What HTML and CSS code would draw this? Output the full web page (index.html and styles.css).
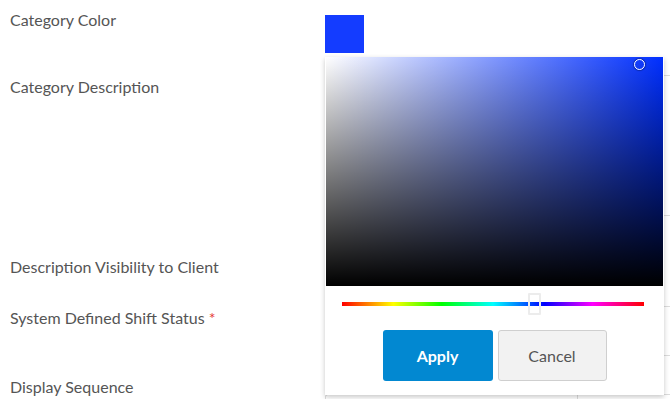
FILE: index.html
```html
<!DOCTYPE html>
<html lang="en">
<head>
    <meta charset="UTF-8">
    <title>Category</title>
    <link rel="stylesheet" href="styles.css">
</head>
<body>
    <div class="form">
        <div class="row row-color">
            <label>Category Color</label>
            <div class="field"><div class="swatch"></div></div>
        </div>
        <div class="row row-desc">
            <label>Category Description</label>
            <div class="field"><div class="textarea"></div></div>
        </div>
        <div class="row row-vis">
            <label>Description Visibility to Client</label>
            <div class="field"></div>
        </div>
        <div class="row row-status">
            <label>System Defined Shift Status <span class="req">*</span></label>
            <div class="field"><div class="select"></div></div>
        </div>
        <div class="row row-seq">
            <label>Display Sequence</label>
            <div class="field"><div class="input"><span class="spin"></span></div></div>
        </div>
    </div>

    <div class="picker">
        <div class="saturation">
            <span class="pointer"></span>
        </div>
        <div class="hue">
            <span class="hue-thumb"></span>
        </div>
        <div class="actions">
            <button class="btn btn-apply">Apply</button>
            <button class="btn btn-cancel">Cancel</button>
        </div>
    </div>
</body>
</html>
```

FILE: styles.css
```css
body {
    margin: 0;
    font-family: Lato, "Open Sans", sans-serif;
    font-size: 16px;
    color: #555;
    background: #fff;
    overflow: hidden;
    height: 399px;
    position: relative;
}
.form {
    width: 670px;
}
.row {
    display: flex;
    align-items: flex-start;
}
.row label {
    width: 315px;
    padding-left: 10px;
    line-height: 20px;
}
.field {
    flex: 1;
}
.req {
    color: #e53935;
}

.row-color { height: 67px; }
.row-color label { margin-top: 10px; }
.swatch {
    margin-top: 15px;
    width: 39px;
    height: 38px;
    background: #143cff;
}

.row-desc { height: 173px; }
.row-desc label { margin-top: 10px; }
.textarea {
    margin-top: 8px;
    height: 139px;
    border: 1px solid #dcdcdc;
    border-right: none;
    border-radius: 3px 0 0 3px;
}

.row-vis { height: 56px; }
.row-vis label { margin-top: 17px; }

.row-status { height: 69px; }
.row-status label { margin-top: 12px; }
.select {
    margin-top: 10px;
    height: 48px;
    border: 1px solid #dcdcdc;
    border-right: none;
    border-radius: 3px 0 0 3px;
}

.row-seq { height: 34px; }
.row-seq label { margin-top: 12px; }
.input {
    margin-top: 29px;
    height: 4px;
    border-top: 1px solid #dcdcdc;
    border-left: 1px solid #dcdcdc;
    border-radius: 3px 0 0 0;
    position: relative;
}
.spin {
    position: absolute;
    left: 251px;
    top: 0;
    bottom: 0;
    border-left: 1px solid #dcdcdc;
}

.picker {
    position: absolute;
    left: 325px;
    top: 57px;
    width: 339px;
    height: 338px;
    background: #fff;
    box-shadow: 0 2px 5px rgba(0, 0, 0, 0.22);
}
.saturation {
    position: relative;
    margin: 0 1px;
    height: 229px;
    background:
        linear-gradient(to top, #000, rgba(0, 0, 0, 0)),
        linear-gradient(to right, #fff, hsl(229, 100%, 50%));
}
.pointer {
    position: absolute;
    left: 308px;
    top: 2px;
    width: 9px;
    height: 9px;
    border: 1.5px solid #fff;
    border-radius: 50%;
    box-shadow: 0 0 1px 1px rgba(0, 0, 0, 0.3);
}
.hue {
    position: relative;
    margin: 16px 20px 0 17px;
    height: 4px;
    background: linear-gradient(to right, #f00 0%, #ff0 17%, #0f0 33%, #0ff 50%, #00f 67%, #f0f 83%, #f00 100%);
}
.hue-thumb {
    position: absolute;
    left: 186px;
    top: -9px;
    width: 9px;
    height: 18px;
    border: 2px solid #ececec;
    border-radius: 1px;
}
.actions {
    display: flex;
    justify-content: center;
    gap: 5px;
    margin-top: 24px;
}
.btn {
    width: 110px;
    height: 51px;
    border-radius: 3px;
    font-family: Lato, "Open Sans", sans-serif;
    font-size: 16px;
    cursor: pointer;
}
.btn-apply {
    background: #0288d1;
    color: #fff;
    border: none;
    font-weight: 700;
}
.btn-cancel {
    width: 109px;
    background: #f2f2f2;
    color: #555;
    border: 1px solid #cfcfcf;
}
```
